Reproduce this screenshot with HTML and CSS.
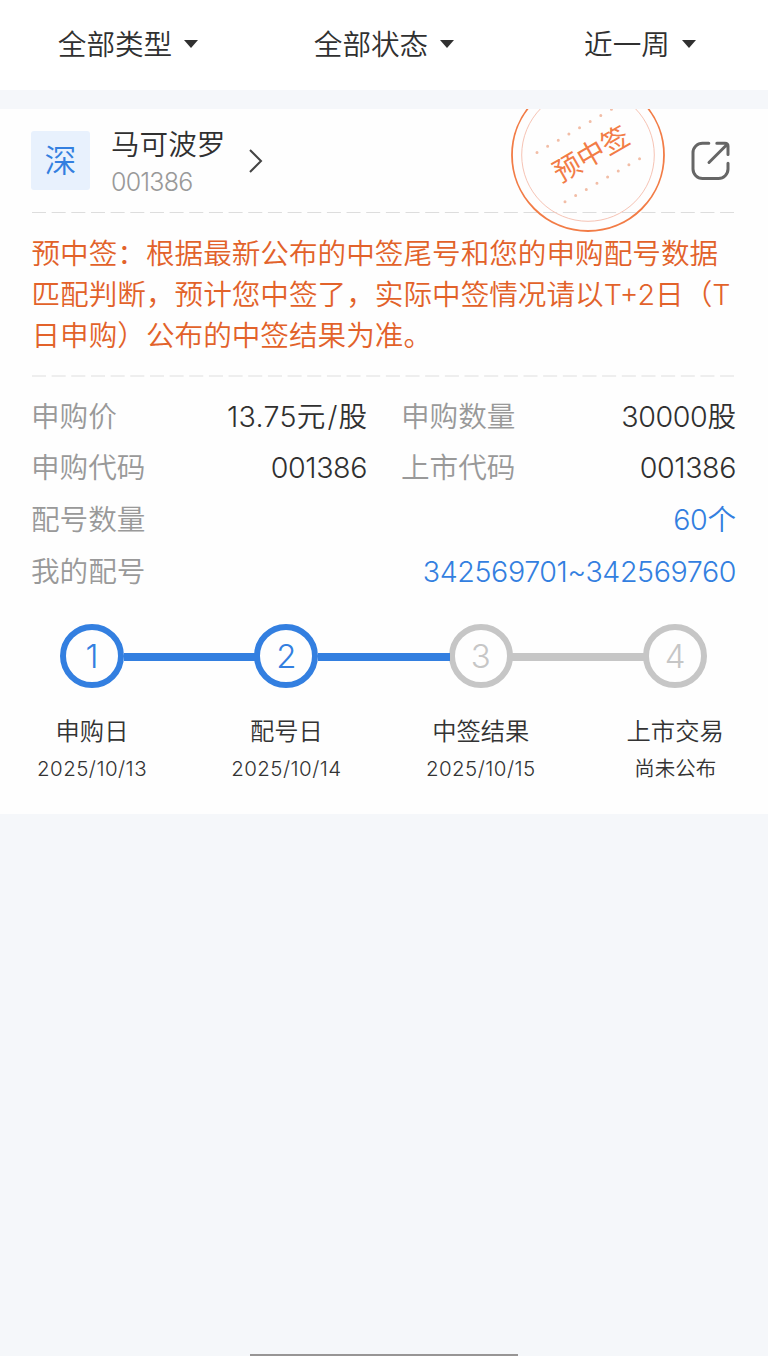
FILE: index.html
```html
<!DOCTYPE html>
<html lang="zh-CN">
<head>
<meta charset="utf-8">
<title>新股配号</title>
<link rel="stylesheet" href="styles.css">
</head>
<body>
<nav class="filters">
  <div class="filter"><span>全部类型</span><i class="caret"></i></div>
  <div class="filter"><span>全部状态</span><i class="caret"></i></div>
  <div class="filter"><span>近一周</span><i class="caret"></i></div>
</nav>
<main class="card">
  <svg class="stamp" width="156" height="124" viewBox="0 0 156 124">
    <circle class="ring-outer" cx="78" cy="46" r="76"/>
    <circle class="ring-inner" cx="78" cy="46" r="66.3"/>
    <path class="dots" d="M27 43.5 L113 -6.5"/>
    <path class="dots" d="M55 92.7 L131 48.8"/>
    <text class="stamp-text" transform="translate(81 45) rotate(-30)" x="0" y="10">预中签</text>
  </svg>
  <header class="stock">
    <div class="market">深</div>
    <div class="names">
      <div class="name">马可波罗</div>
      <div class="code">001386</div>
    </div>
    <svg class="chevron" width="16" height="26" viewBox="0 0 16 26"><path d="M2 2 L13 13 L2 24"/></svg>
    <svg class="share" width="40" height="40" viewBox="0 0 40 40">
      <path d="M17.8 2.2 H11.5 A9.5 9.5 0 0 0 2 11.7 V28 A9.5 9.5 0 0 0 11.5 37.500 H27.500 A9.500 9.500 0 0 0 37 28 V22.200 M25.800 2.200 H34 Q37 2.200 37 5.200 V13.400 M36 3.500 L18 21.500"/>
    </svg>
  </header>
  <svg class="rule" width="702" height="2"><path d="M0 1.500 H702"/></svg>
  <div class="notice">
    <div>预中签：根据最新公布的中签尾号和您的申购配号数据</div>
    <div>匹配判断，预计您中签了，实际中签情况请以T+2日（T</div>
    <div>日申购）公布的中签结果为准。</div>
  </div>
  <svg class="rule" width="702" height="2"><path d="M0 1 H702"/></svg>
  <dl class="details">
    <div class="pair"><dt>申购价</dt><dd><span class="price">13.75</span>元<span class="slash">/</span>股</dd></div>
    <div class="pair"><dt>申购数量</dt><dd><span class="num">30000</span>股</dd></div>
    <div class="pair"><dt>申购代码</dt><dd class="num">001386</dd></div>
    <div class="pair"><dt>上市代码</dt><dd class="num">001386</dd></div>
    <div class="pair wide"><dt>配号数量</dt><dd class="link"><span class="num">60</span>个</dd></div>
    <div class="pair wide"><dt>我的配号</dt><dd class="link num">342569701~342569760</dd></div>
  </dl>
  <ol class="steps">
    <li class="step done"><b class="dot">1</b><span class="label">申购日</span><span class="date">2025/10/13</span></li>
    <li class="step done"><b class="dot">2</b><span class="label">配号日</span><span class="date">2025/10/14</span></li>
    <li class="step"><b class="dot">3</b><span class="label">中签结果</span><span class="date">2025/10/15</span></li>
    <li class="step"><b class="dot">4</b><span class="label">上市交易</span><span class="date cjk">尚未公布</span></li>
  </ol>
</main>
<div class="home-bar"></div>
</body>
</html>
```
FILE: styles.css
```css
* { box-sizing: border-box; }
body {
  margin: 0;
  height: 1356px;
  display: flex;
  flex-direction: column;
  background: #f5f7fa;
  color: #303030;
  font: 350 28.62px/40px Inter, "Noto Sans CJK SC", sans-serif;
  overflow: hidden;
}
.filters {
  height: 90px;
  display: flex;
  background: #fff;
  padding-bottom: 2px;
}
.filter {
  flex: 1;
  display: flex;
  align-items: center;
  justify-content: center;
  gap: 12px;
}
.filter span { padding-top: 2px; }
.caret {
  border: 7.5px solid transparent;
  border-top: 8px solid #303030;
  border-bottom: 0;
}
.card {
  position: relative;
  height: 705px;
  margin-top: 19px;
  padding: 0 32px;
  background: #fefefe;
  overflow: hidden;
}
.stamp { position: absolute; left: 510px; top: 0; }
.stamp circle { fill: none; }
.ring-outer { stroke: #f27c46; stroke-width: 1.8; }
.ring-inner { stroke: #f6c3b4; stroke-width: 1; }
.dots { fill: none; stroke: #f2bda6; stroke-width: 3; stroke-linecap: round; stroke-dasharray: 0 12.3; }
.stamp-text { fill: #f27c46; font-size: 27.5px; font-weight: 400; text-anchor: middle; }
.stock { display: flex; height: 102px; padding-top: 13px; }
.market {
  width: 59px;
  height: 59px;
  margin: 9px 21px 0 -1px;
  background: #e8f1fd;
  border-radius: 3px;
  color: #337fe0;
  font-size: 32px;
  line-height: 60px;
  text-align: center;
}
.names { width: 138px; padding-top: 2px; }
.name { line-height: 42px; }
.code { color: #999; font-size: 25px; line-height: 32px; letter-spacing: -0.8px; }
.chevron { margin-top: 26px; margin-left: -1px; fill: none; stroke: #444; stroke-width: 2; }
.share { margin: 19px 5px 0 auto; fill: none; stroke: #666; stroke-width: 3; stroke-linecap: round; }
.rule { display: block; }
.rule path { stroke: #ddd; stroke-width: 1.2; stroke-dasharray: 14 5.66; }
.notice { height: 162px; padding-top: 20px; line-height: 41.2px; color: #e2622a; white-space: nowrap; margin-left: -0.5px; }
.details {
  display: grid;
  grid-template-columns: 335px 334px;
  column-gap: 35px;
  grid-auto-rows: 51.6px;
  margin: 14px 0 0;
}
.pair { display: flex; justify-content: space-between; align-items: center; white-space: nowrap; }
.wide { grid-column: 1 / 3; }
dt { color: #999; margin-left: -1px; }
dd { margin: 0; }
.num { letter-spacing: -0.4px; }
.price { letter-spacing: 0.3px; }
.slash { padding: 0 1px 0 2px; }
.link { color: #337fe0; }
.steps {
  display: grid;
  grid-template-columns: repeat(4, 194.4px);
  margin: 27px -37.2px 0;
  padding: 0;
  list-style: none;
}
.step { position: relative; display: flex; flex-direction: column; align-items: center; color: #333; }
.step + .step::before {
  content: "";
  position: absolute;
  top: 29px;
  right: 128px;
  width: 132px;
  height: 8px;
  background: #c6c6c6;
}
.step:nth-child(2)::before, .step:nth-child(3)::before { background: #337fe0; }
.dot {
  width: 64px;
  height: 64px;
  border: 6px solid #c6c6c6;
  border-radius: 50%;
  color: #c6c6c6;
  font-size: 33px;
  font-weight: 300;
  line-height: 52px;
  text-align: center;
}
.done .dot { border-color: #337fe0; color: #337fe0; }
.label { margin-top: 23px; font-size: 24.3px; line-height: 40px; }
.date { margin-top: 1px; font-size: 20.5px; line-height: 34px; letter-spacing: 0.45px; }
.cjk { letter-spacing: 0; }
.home-bar {
  width: 268px;
  height: 2px;
  margin: auto 0 0 250px;
  background: #979595;
}
```
